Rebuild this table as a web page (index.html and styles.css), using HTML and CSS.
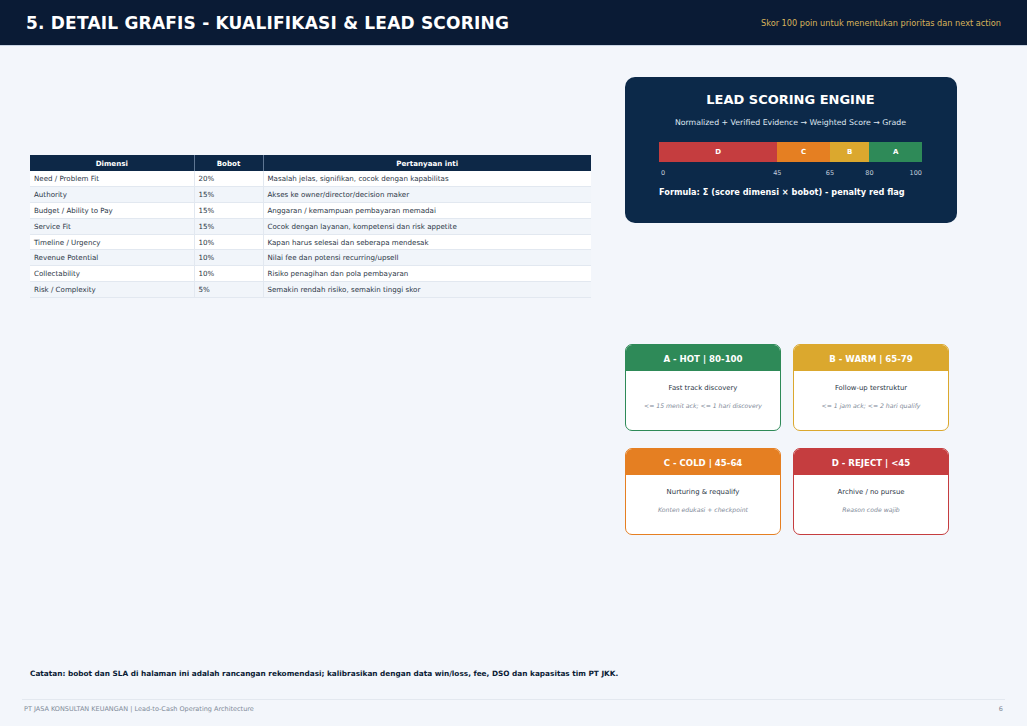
FILE: index.html
```html
<!DOCTYPE html>
<html lang="id">
<head>
<meta charset="utf-8">
<title>Detail Grafis - Kualifikasi & Lead Scoring</title>
<link rel="stylesheet" href="styles.css">
</head>
<body>
<div class="page">
  <header class="topbar">
    <h1 class="title">5. DETAIL GRAFIS - KUALIFIKASI &amp; LEAD SCORING</h1>
    <div class="subtitle">Skor 100 poin untuk menentukan prioritas dan next action</div>
  </header>

  <main class="main">
    <section class="left">
      <table class="score-table">
        <thead>
          <tr><th class="c1">Dimensi</th><th class="c2">Bobot</th><th class="c3">Pertanyaan inti</th></tr>
        </thead>
        <tbody>
          <tr><td>Need / Problem Fit</td><td>20%</td><td>Masalah jelas, signifikan, cocok dengan kapabilitas</td></tr>
          <tr><td>Authority</td><td>15%</td><td>Akses ke owner/director/decision maker</td></tr>
          <tr><td>Budget / Ability to Pay</td><td>15%</td><td>Anggaran / kemampuan pembayaran memadai</td></tr>
          <tr><td>Service Fit</td><td>15%</td><td>Cocok dengan layanan, kompetensi dan risk appetite</td></tr>
          <tr><td>Timeline / Urgency</td><td>10%</td><td>Kapan harus selesai dan seberapa mendesak</td></tr>
          <tr><td>Revenue Potential</td><td>10%</td><td>Nilai fee dan potensi recurring/upsell</td></tr>
          <tr><td>Collectability</td><td>10%</td><td>Risiko penagihan dan pola pembayaran</td></tr>
          <tr><td>Risk / Complexity</td><td>5%</td><td>Semakin rendah risiko, semakin tinggi skor</td></tr>
        </tbody>
      </table>
    </section>

    <section class="right">
      <div class="engine">
        <h2 class="engine-title">LEAD SCORING ENGINE</h2>
        <div class="engine-sub">Normalized + Verified Evidence → Weighted Score → Grade</div>
        <div class="bar">
          <div class="seg seg-d" style="flex-basis:45%">D</div>
          <div class="seg seg-c" style="flex-basis:20%">C</div>
          <div class="seg seg-b" style="flex-basis:15%">B</div>
          <div class="seg seg-a" style="flex-basis:20%">A</div>
        </div>
        <div class="ticks">
          <span class="tick tick-start" style="left:0%">0</span>
          <span class="tick" style="left:45%">45</span>
          <span class="tick" style="left:65%">65</span>
          <span class="tick" style="left:80%">80</span>
          <span class="tick tick-end" style="left:100%">100</span>
        </div>
        <div class="formula">Formula: Σ (score dimensi × bobot) - penalty red flag</div>
      </div>

      <div class="grades">
        <div class="grade grade-a">
          <div class="grade-head">A - HOT | 80-100</div>
          <div class="grade-body">
            <div class="grade-main">Fast track discovery</div>
            <div class="grade-note">&lt;= 15 menit ack; &lt;= 1 hari discovery</div>
          </div>
        </div>
        <div class="grade grade-b">
          <div class="grade-head">B - WARM | 65-79</div>
          <div class="grade-body">
            <div class="grade-main">Follow-up terstruktur</div>
            <div class="grade-note">&lt;= 1 jam ack; &lt;= 2 hari qualify</div>
          </div>
        </div>
        <div class="grade grade-c">
          <div class="grade-head">C - COLD | 45-64</div>
          <div class="grade-body">
            <div class="grade-main">Nurturing &amp; requalify</div>
            <div class="grade-note">Konten edukasi + checkpoint</div>
          </div>
        </div>
        <div class="grade grade-d">
          <div class="grade-head">D - REJECT | &lt;45</div>
          <div class="grade-body">
            <div class="grade-main">Archive / no pursue</div>
            <div class="grade-note">Reason code wajib</div>
          </div>
        </div>
      </div>
    </section>
  </main>

  <p class="note">Catatan: bobot dan SLA di halaman ini adalah rancangan rekomendasi; kalibrasikan dengan data win/loss, fee, DSO dan kapasitas tim PT JKK.</p>

  <footer class="footer">
    <span>PT JASA KONSULTAN KEUANGAN | Lead-to-Cash Operating Architecture</span>
    <span>6</span>
  </footer>
</div>
</body>
</html>
```

FILE: styles.css
```css
* { box-sizing: border-box; }

html, body {
  margin: 0;
  padding: 0;
}

body {
  background: #f3f6fb;
  font-family: "DejaVu Sans", "Liberation Sans", sans-serif;
  color: #1f2a3a;
}

.page {
  width: 1027px;
  height: 726px;
  display: flex;
  flex-direction: column;
  overflow: hidden;
}

/* Header */
.topbar {
  height: 46px;
  flex: none;
  background: #0a1b35;
  display: flex;
  align-items: center;
  justify-content: space-between;
  padding: 1px 26px 0 26px;
  border-bottom: 1px solid #c9d4e3;
}

.title {
  margin: 0;
  color: #ffffff;
  font-size: 17px;
  font-weight: bold;
  letter-spacing: 0.2px;
}

.subtitle {
  color: #d7b35b;
  font-size: 8.2px;
}

/* Main */
.main {
  display: flex;
  gap: 34px;
  padding: 0 70px 0 30px;
  height: 560px;
  flex: none;
}

.left {
  width: 561px;
  flex: none;
  padding-top: 109px;
}

.right {
  width: 332px;
  flex: none;
  padding-top: 31px;
}

/* Table */
.score-table {
  width: 561px;
  border-collapse: collapse;
  font-size: 7.1px;
  color: #2b3646;
}

.score-table th {
  background: #0d2847;
  color: #ffffff;
  font-weight: bold;
  height: 16px;
  padding: 0 4px;
  border-left: 1px solid #5e7693;
  text-align: center;
}

.score-table th:first-child { border-left: none; }

.score-table .c1 { width: 164px; }
.score-table .c2 { width: 69px; }

.score-table td {
  height: 15.8px;
  padding: 0 4px;
  border-left: 1px solid #e2e8f0;
  border-bottom: 1px solid #e2e8f0;
  background: #ffffff;
}

.score-table td:first-child { border-left: none; }

.score-table tbody tr:nth-child(even) td { background: #f1f5fa; }

/* Engine card */
.engine {
  background: #0c2949;
  border-radius: 10px;
  height: 146px;
  padding: 15px 35px 0 34px;
  color: #ffffff;
}

.engine-title {
  margin: 0;
  text-align: center;
  font-size: 13px;
  font-weight: bold;
  line-height: 16px;
}

.engine-sub {
  margin-top: 10px;
  text-align: center;
  font-size: 7.8px;
  color: #dfe7f1;
  line-height: 10px;
}

.bar {
  margin-top: 14px;
  display: flex;
  height: 20px;
}

.seg {
  display: flex;
  align-items: center;
  justify-content: center;
  font-size: 7px;
  font-weight: bold;
  color: #ffffff;
}

.seg-d { background: #c53d3f; }
.seg-c { background: #e57f22; }
.seg-b { background: #dba82e; }
.seg-a { background: #2e8a58; }

.ticks {
  position: relative;
  height: 12px;
  margin-top: 7px;
  font-size: 6.5px;
  color: #c2cedd;
}

.tick {
  position: absolute;
  top: 0;
  transform: translateX(-50%);
}

.tick-start { transform: translateX(0); margin-left: 2px; }
.tick-end { transform: translateX(-100%); }

.formula {
  margin-top: 5px;
  font-size: 8.2px;
  font-weight: bold;
  line-height: 12px;
}

/* Grade cards */
.grades {
  margin-top: 121px;
  width: 324px;
  display: grid;
  grid-template-columns: 156px 156px;
  column-gap: 12px;
  row-gap: 17px;
}

.grade {
  height: 87px;
  background: #ffffff;
  border: 1.5px solid;
  border-radius: 7px;
  overflow: hidden;
}

.grade-head {
  height: 26px;
  display: flex;
  align-items: center;
  justify-content: center;
  color: #ffffff;
  font-size: 8.6px;
  font-weight: bold;
  padding-top: 1px;
}

.grade-body {
  text-align: center;
  padding-top: 12px;
}

.grade-main {
  font-size: 6.9px;
  color: #2b3646;
  line-height: 10px;
}

.grade-note {
  margin-top: 8px;
  font-size: 6.15px;
  font-style: italic;
  color: #7d8796;
  line-height: 9px;
}

.grade-a { border-color: #2e8a58; }
.grade-a .grade-head { background: #2e8a58; }
.grade-b { border-color: #dba82e; }
.grade-b .grade-head { background: #dba82e; }
.grade-c { border-color: #e57f22; }
.grade-c .grade-head { background: #e57f22; }
.grade-d { border-color: #c53d3f; }
.grade-d .grade-head { background: #c53d3f; }

/* Note */
.note {
  margin: 63px 0 0 30px;
  font-size: 7.33px;
  font-weight: bold;
  color: #0a1b35;
  line-height: 10px;
}

/* Footer */
.footer {
  margin: 20px 22px 0 22px;
  border-top: 1px solid #e3e8ef;
  padding: 5px 2px 0 2px;
  display: flex;
  justify-content: space-between;
  font-size: 6.5px;
  color: #7f8a99;
}
```
